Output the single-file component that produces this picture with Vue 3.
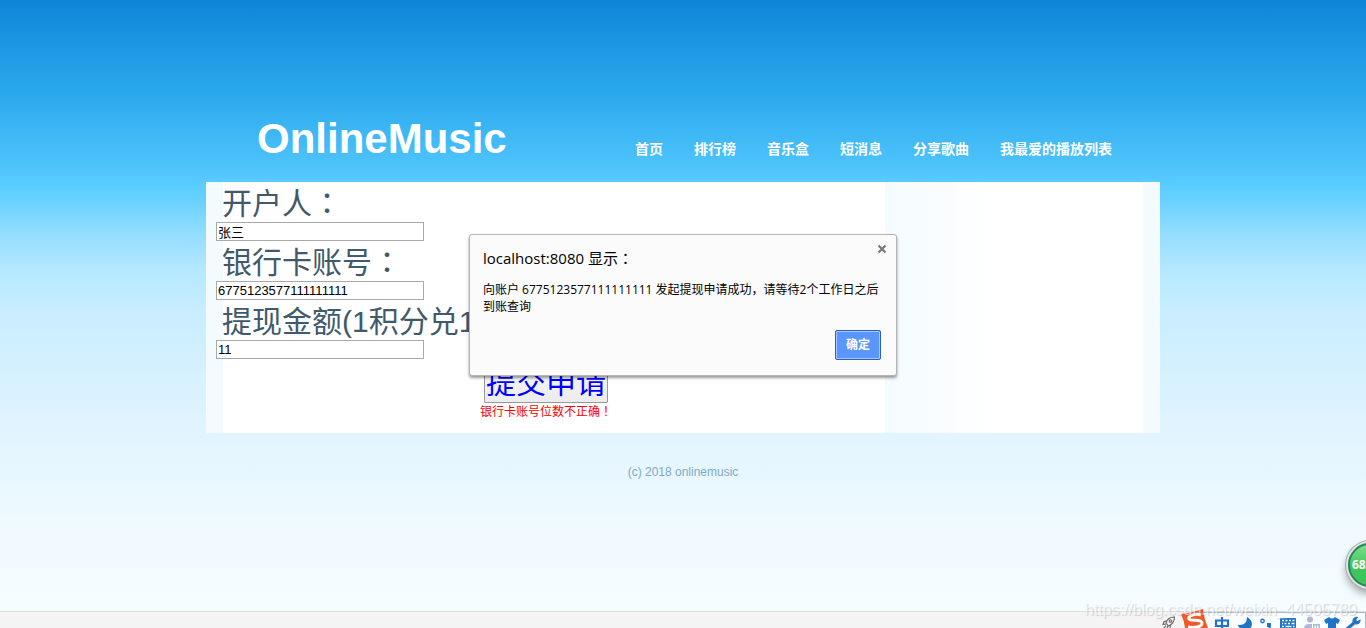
<script setup>
import { ref } from 'vue'

const links = ['首页', '排行榜', '音乐盒', '短消息', '分享歌曲', '我最爱的播放列表']
const owner = ref('张三')
const card = ref('6775123577111111111')
const amount = ref('11')
</script>

<template>
  <div class="page">
    <div class="wrap">
      <header class="header">
        <h1 class="logo">OnlineMusic</h1>
        <nav class="nav">
          <a v-for="l in links" :key="l" href="#">{{ l }}</a>
        </nav>
      </header>
      <main class="content">
        <form class="form" @submit.prevent>
          <label for="owner">开户人<span class="punct">：</span></label>
          <input id="owner" v-model="owner" type="text">
          <label for="card">银行卡账号<span class="punct">：</span></label>
          <input id="card" v-model="card" type="text">
          <label for="amount">提现金额(1积分兑1</label>
          <input id="amount" v-model="amount" type="text">
          <div class="submit">
            <button type="submit">提交申请</button>
            <p class="error">银行卡账号位数不正确<span class="punct">！</span></p>
          </div>
        </form>
        <aside class="side"></aside>
      </main>
      <footer class="footer">(c) 2018 onlinemusic</footer>
    </div>

    <section class="dialog" role="dialog" aria-labelledby="dialog-title">
      <button class="close" type="button" aria-label="关闭">
        <svg width="10" height="10" viewBox="0 0 10 10"><path d="M1.5 1.5 8.5 8.5M8.5 1.5 1.5 8.5" stroke="#777" stroke-width="2.2" /></svg>
      </button>
      <h2 id="dialog-title">localhost:8080 显示<span class="punct">：</span></h2>
      <p>向账户 6775123577111111111 发起提现申请成功，请等待2个工作日之后到账查询</p>
      <div class="actions"><button class="ok" type="button">确定</button></div>
    </section>

    <div class="ball"><span>68</span></div>

    <div class="statusbar">
      <svg class="rocket" width="14" height="14" viewBox="0 0 14 14" fill="none" stroke="#666" stroke-width="1.1">
        <path d="M4 7C5 3 8 1 12.5 1 12.5 5 10 8.5 6.5 10ZM4.5 5 2 5.5 1 8.5 4 8M8.5 9 8 12 5 13 5.5 10M1 13 4 9.5" /><circle cx="8.5" cy="5" r="1.3" />
      </svg>
      <div class="ime">
        <svg width="160" height="16" viewBox="24 0 160 16">
          <path d="M36 7.5H48V13H36ZM42 4V16" fill="none" stroke="#1f74c7" stroke-width="2.2" />
          <circle cx="82.5" cy="8" r="1.7" fill="none" stroke="#1f74c7" stroke-width="1.4" />
          <path d="M67 4Q75 9 70 16H61Q58 14 58 12 67 13 67 4ZM87 10h4v3q0 3-3 3h-1q2-1 1.5-2H87Z" fill="#1f74c7" />
          <rect x="100" y="5" width="16" height="12" rx="1" fill="#1f74c7" />
          <path d="M102 7.5h2m1.5 0h2m1.5 0h2m1.5 0h2M102 10.5h1m1.5 0h2m1.5 0h2m1.5 0h3M102 13.5h2m1.5 0h6m1.5 0h1.5" stroke="#fff" stroke-width="1.5" />
          <g fill="#aeb9d2"><circle cx="130" cy="6.5" r="3" /><path d="M124 16q0-5 5-5h3v5ZM133 11h7v5h-1.5v-3.5h-1.5v3.5h-1v-3.5h-1.5v3.5H133Z" /></g>
          <path d="M149 4Q152 7 155 4L160 7 158 11 156 10V16H148V10L146 11 144 7Z" fill="#1f74c7" />
          <path d="M167 16 174 10" stroke="#1f74c7" stroke-width="3.2" />
          <path d="M178 4.500Q173 4 173 8 173 11 176 11 179.5 11 180 7.5L177 8.5 175.5 7.5Z" fill="#1f74c7" stroke="#1f74c7" stroke-width="1.2" />
          <path d="M177 7 180 4" stroke="#fafdff" stroke-width="2" />
        </svg>
      </div>
      <svg class="sogou" width="30" height="20" viewBox="0 0 30 20">
        <path d="M1 6Q12 5 23 1 24 11 28 20H5Q4 12 1 6Z" fill="#f1592a" />
        <path d="M21 7C16 5 7 8 9 11 11 14 21 10 22 15 22 19 14 20 8 19" fill="none" stroke="#fff" stroke-width="3" />
      </svg>
    </div>
    <div class="watermark">https://blog.csdn.net/weixin_44505789</div>
  </div>
</template>

<style>
body {
  margin: 0;
}
</style>

<style scoped>
.page {
  position: relative;
  min-height: 100vh;
  overflow: hidden;
  font-family: "Liberation Sans", "Noto Sans CJK SC", sans-serif;
  background: linear-gradient(#0f85d8 0, #2ba9ed 95px, #4dc3fb 165px, #5acdff 185px, #68d1ff 200px, #90dcff 230px, #b5e8ff 270px, #c6edff 305px, #d3f0ff 360px, #e2f5ff 440px, #f1faff 530px, #f5fdff 610px);
}
.punct {
  font-family: "Noto Sans CJK TC", sans-serif;
  line-height: 1;
}
.wrap {
  width: 954px;
  max-width: 100%;
  margin: 0 auto;
}
.header {
  height: 182px;
  box-sizing: border-box;
  display: flex;
  justify-content: space-between;
  align-items: flex-end;
  padding: 0 48px 16px 51px;
}
.logo {
  margin: 0;
  font-size: 42px;
  line-height: 54px;
  color: #fff;
}
.nav {
  display: flex;
  gap: 31px;
  padding-bottom: 7px;
}
.nav a {
  font-size: 14px;
  line-height: 20px;
  font-weight: bold;
  color: #fff;
  text-decoration: none;
}
.content {
  display: flex;
  min-height: 251px;
  box-sizing: border-box;
  background: #fff;
  border-left: 17px solid #f4fbff;
  border-right: 17px solid #f4fbff;
}
.form {
  width: 662px;
  display: flex;
  flex-direction: column;
  align-items: flex-start;
  padding-top: 3px;
}
.form label {
  margin-left: -1px;
  font-size: 30px;
  line-height: 37px;
  color: #405a6b;
  white-space: nowrap;
}
.form input {
  box-sizing: border-box;
  width: 208px;
  height: 19px;
  margin: 0 0 3px -7px;
  padding: 0 1px;
  border: 1px solid #a9a9a9;
  background: #fff;
  color: #000;
  font-family: inherit;
  font-size: 13px;
}
.submit {
  align-self: center;
  display: flex;
  flex-direction: column;
  align-items: center;
  padding: 1px 16px 0 0;
}
.submit button {
  padding: 0 1px;
  border: 1px solid #999;
  border-radius: 1px;
  background: linear-gradient(#f6f6f6, #ececec);
  color: #00f;
  font-family: inherit;
  font-size: 30px;
  line-height: 38px;
}
.error {
  margin: 0;
  font-size: 12px;
  line-height: 18px;
  color: #f00;
}
.side {
  flex: 1;
  background: linear-gradient(90deg, #f4fbff, #fff 110px);
}
.footer {
  padding-top: 30px;
  font-size: 12px;
  line-height: 18px;
  text-align: center;
  color: #81a9c4;
}
.dialog {
  position: absolute;
  top: 234px;
  left: 50%;
  width: 428px;
  margin-left: -214px;
  box-sizing: border-box;
  padding: 12px 12px 15px 13px;
  border: 1px solid #b5b5b5;
  border-radius: 3px;
  background: #fbfbfb;
  box-shadow: 0 2px 3px rgba(0, 0, 0, .4);
  font-family: "Open Sans", "Noto Sans CJK SC", sans-serif;
  color: #000;
}
.dialog h2 {
  margin: 0;
  font-size: 15px;
  font-weight: normal;
  line-height: 22px;
}
.dialog p {
  margin: 12px 0 0;
  font-size: 12px;
  line-height: 17px;
}
.close {
  position: absolute;
  top: 9px;
  right: 9px;
  display: flex;
  padding: 0;
  border: 0;
  background: none;
}
.actions {
  display: flex;
  justify-content: flex-end;
  padding: 15px 3px 0 0;
}
.ok {
  width: 46px;
  height: 30px;
  padding: 0 0 2px;
  border: 1px solid #2a5fc4;
  border-radius: 2px;
  background: #5b96ff;
  box-shadow: inset 0 0 0 1px #a9c8ff;
  color: #fff;
  font-family: inherit;
  font-size: 12px;
  font-weight: bold;
}
.ball {
  position: absolute;
  top: 543px;
  right: -26px;
  width: 40px;
  height: 40px;
  border: 2px solid #24885a;
  border-radius: 50%;
  background: linear-gradient(#7fdc8d, #3fc65a 55%);
  box-shadow: 0 0 0 2px #e0e2e4, 0 0 0 3px #aaa, 0 5px 8px 2px rgba(0, 0, 0, .35);
  display: flex;
  align-items: center;
  color: #fff;
  font: bold 12px "Open Sans", sans-serif;
}
.ball span {
  padding: 0 0 2px 2px;
}
.statusbar {
  position: absolute;
  left: 0;
  right: 0;
  bottom: 0;
  height: 17px;
  box-sizing: border-box;
  border-top: 1px solid #ddd;
  background: #f4f4f4;
}
.rocket {
  position: absolute;
  right: 190px;
  top: 4px;
}
.ime {
  position: absolute;
  right: 0;
  top: 0;
  width: 162px;
  height: 16px;
  box-sizing: border-box;
  border-top: 1px solid #a9bccd;
  border-right: 1px solid #a9bccd;
  background: #fafdff;
  overflow: hidden;
}
.sogou {
  position: absolute;
  right: 156px;
  top: -4px;
}
.watermark {
  position: absolute;
  right: 9px;
  bottom: 8px;
  font-size: 16px;
  line-height: 20px;
  color: rgba(255, 255, 255, .6);
  text-shadow: 1px 1px 1px rgba(120, 120, 120, .3);
}
</style>
